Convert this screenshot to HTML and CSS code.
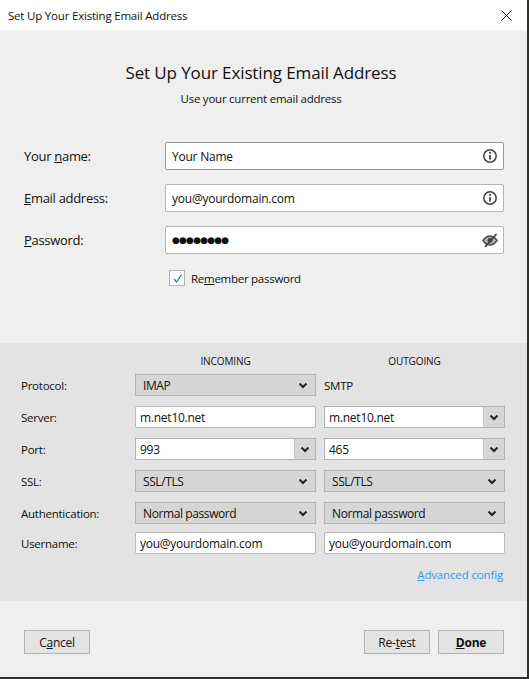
FILE: index.html
```html
<!DOCTYPE html>
<html lang="en">
<head>
<meta charset="utf-8">
<title>Set Up Your Existing Email Address</title>
<link rel="stylesheet" href="styles.css">
</head>
<body>
<div class="window">
  <header class="titlebar">
    <span class="titlebar-text">Set Up Your Existing Email Address</span>
    <svg class="close" width="11" height="11" viewBox="0 0 11 11"><path d="M.5.5l10 10M10.500.5l-10 10" stroke="#111" fill="none"/></svg>
  </header>
  <main class="content">
    <section class="intro">
      <h1 class="heading">Set Up Your Existing Email Address</h1>
      <p class="subheading">Use your current email address</p>
    </section>
    <section class="identity">
      <label class="id-label">Your <u>n</u>ame:</label>
      <div class="id-field id-field-active"><span>Your Name</span>
        <svg class="fi" width="16" height="16" viewBox="0 0 16 16"><circle cx="8" cy="8" r="6.200" fill="none" stroke="#444" stroke-width="1.500"/><path d="M8 7v4.500" stroke="#444" stroke-width="1.800"/><circle cx="8" cy="4.800" r="1.100" fill="#444"/></svg>
      </div>
      <label class="id-label"><u>E</u>mail address:</label>
      <div class="id-field"><span>you@yourdomain.com</span>
        <svg class="fi" width="16" height="16" viewBox="0 0 16 16"><circle cx="8" cy="8" r="6.200" fill="none" stroke="#444" stroke-width="1.500"/><path d="M8 7v4.500" stroke="#444" stroke-width="1.800"/><circle cx="8" cy="4.800" r="1.100" fill="#444"/></svg>
      </div>
      <label class="id-label"><u>P</u>assword:</label>
      <div class="id-field"><span class="dots">●●●●●●●●</span>
        <svg class="fi" width="16" height="16" viewBox="0 0 16 16"><path d="M1 8.500C3 5.500 5.300 4.200 8 4.200s5 1.300 7 4.300c-2 3-4.300 4.300-7 4.300s-5-1.300-7-4.300z" fill="#b5b5b5" stroke="#555" stroke-width="1.700"/><circle cx="8" cy="8.500" r="2.400" fill="#444"/><path d="M3 15L14.500 2" stroke="#444" stroke-width="1.800"/></svg>
      </div>
      <div class="remember">
        <span class="checkbox"><svg width="13" height="13" viewBox="0 0 13 13"><path d="M3 7l2.500 3L10.500 2.500" fill="none" stroke="#1c7fd6" stroke-width="1.300"/></svg></span>
        <span>Re<u>m</u>ember password</span>
      </div>
    </section>
    <section class="panel">
      <div class="config">
        <span class="col-head"></span><div class="col-head">INCOMING</div><div class="col-head">OUTGOING</div>
        <div class="cfg-label">Protocol:</div>
        <div class="select"><span>IMAP</span><svg class="chev" width="10" height="7" viewBox="0 0 10 7"><path d="M1.500 1.500L5 5l3.500-3.500" fill="none" stroke="#222" stroke-width="2"/></svg></div>
        <div class="plain">SMTP</div>
        <div class="cfg-label">Server:</div>
        <div class="text-input">m.net10.net</div>
        <div class="combo"><span class="combo-text">m.net10.net</span><span class="combo-btn"><svg class="chev" width="10" height="7" viewBox="0 0 10 7"><path d="M1.500 1.500L5 5l3.500-3.500" fill="none" stroke="#222" stroke-width="2"/></svg></span></div>
        <div class="cfg-label">Port:</div>
        <div class="combo"><span class="combo-text">993</span><span class="combo-btn"><svg class="chev" width="10" height="7" viewBox="0 0 10 7"><path d="M1.500 1.500L5 5l3.500-3.500" fill="none" stroke="#222" stroke-width="2"/></svg></span></div>
        <div class="combo"><span class="combo-text">465</span><span class="combo-btn"><svg class="chev" width="10" height="7" viewBox="0 0 10 7"><path d="M1.500 1.500L5 5l3.500-3.500" fill="none" stroke="#222" stroke-width="2"/></svg></span></div>
        <div class="cfg-label">SSL:</div>
        <div class="select"><span>SSL/TLS</span><svg class="chev" width="10" height="7" viewBox="0 0 10 7"><path d="M1.500 1.500L5 5l3.500-3.500" fill="none" stroke="#222" stroke-width="2"/></svg></div>
        <div class="select"><span>SSL/TLS</span><svg class="chev" width="10" height="7" viewBox="0 0 10 7"><path d="M1.500 1.500L5 5l3.500-3.500" fill="none" stroke="#222" stroke-width="2"/></svg></div>
        <div class="cfg-label row-auth">Authentication:</div>
        <div class="select row-auth"><span>Normal password</span><svg class="chev" width="10" height="7" viewBox="0 0 10 7"><path d="M1.500 1.500L5 5l3.500-3.500" fill="none" stroke="#222" stroke-width="2"/></svg></div>
        <div class="select row-auth"><span>Normal password</span><svg class="chev" width="10" height="7" viewBox="0 0 10 7"><path d="M1.500 1.500L5 5l3.500-3.500" fill="none" stroke="#222" stroke-width="2"/></svg></div>
        <div class="cfg-label last">Username:</div>
        <div class="text-input last">you@yourdomain.com</div>
        <div class="text-input last">you@yourdomain.com</div>
      </div>
      <div class="advanced"><a class="adv-link"><u>A</u>dvanced config</a></div>
    </section>
    <footer class="actions">
      <button class="btn"><span>C<u>a</u>ncel</span></button>
      <div class="actions-right">
        <button class="btn"><span>Re-<u>t</u>est</span></button>
        <button class="btn btn-primary"><span><u>D</u>one</span></button>
      </div>
    </footer>
  </main>
</div>
</body>
</html>
```
FILE: styles.css
```css
* { box-sizing: border-box; }
html, body { margin: 0; height: 100%; }
body {
  background: #2e2f26;
  overflow: hidden;
  font-family: "Open Sans", "Noto Sans", sans-serif;
  font-size: 12px;
  color: #111;
}
.window { width: 527px; height: 677px; display: flex; flex-direction: column; background: #efefef; }
.titlebar {
  height: 30px; background: #fff; display: flex; align-items: center; justify-content: space-between;
  padding: 0 15px 0 8px; flex: none;
}
.titlebar-text { font-size: 11.5px; letter-spacing: -0.2px; }
.content { flex: 1; display: flex; flex-direction: column; }
.intro { text-align: center; padding: 30px 5px 0 0; height: 112px; }
.heading { margin: 0; font-size: 17px; font-weight: 400; line-height: 26px; letter-spacing: -0.12px; }
.subheading { margin: 5px 0 0; font-size: 11.5px; line-height: 16px; letter-spacing: -0.24px; }
.identity {
  display: grid; grid-template-columns: 141px 339px; row-gap: 14px;
  padding-left: 24px; height: 201px; align-content: start; align-items: center;
}
.id-label { font-size: 13px; letter-spacing: -0.3px; }
.id-field {
  height: 28px; background: #fff; border: 1px solid #b4b4b4; border-radius: 2px;
  display: flex; align-items: center; justify-content: space-between; padding: 0 5px 0 6px;
  font-size: 12px; letter-spacing: -0.23px;
}
.id-field-active { border-color: #999; }
.dots { font-size: 9px; letter-spacing: -0.8px; font-family: "DejaVu Sans", sans-serif; }
.remember {
  grid-column: 2; display: flex; align-items: center; gap: 6px; padding-left: 4px; margin-top: 2px;
  font-size: 11.5px; letter-spacing: -0.27px;
}
.checkbox {
  width: 16px; height: 16px; background: #fff; border: 1px solid #b4b4b4; display: flex;
  align-items: center; justify-content: center;
}
.panel { background: #e3e3e3; height: 258px; padding: 10px 22px 0 21px; border-radius: 3px 0 0 3px; flex: none; }
.config { display: grid; grid-template-columns: 106px 181px 181px; column-gap: 8px; row-gap: 10px; align-items: center; }
.col-head { font-size: 10px; text-align: center; letter-spacing: -0.1px; height: 21px; line-height: 16px; margin-bottom: -10px; }
.cfg-label { font-size: 11.5px; letter-spacing: -0.25px; }
.row-auth { margin-bottom: -2px; }
.select {
  height: 22px; background: #d6d6d6; border: 1px solid #b3b3b3; display: flex; align-items: center;
  justify-content: space-between; padding: 0 7px; font-size: 12px; letter-spacing: -0.4px;
}
.plain { font-size: 11.5px; letter-spacing: -0.25px; }
.text-input {
  height: 22px; background: #fff; border: 1px solid #b9b9b9; border-radius: 2px; padding: 0 4px;
  line-height: 21px; font-size: 12px; letter-spacing: -0.25px; white-space: nowrap;
}
.combo { height: 22px; display: flex; background: #fff; border: 1px solid #b3b3b3; font-size: 12px; letter-spacing: -0.25px; }
.combo-text { flex: 1; padding-left: 4px; line-height: 21px; }
.combo-btn { width: 21px; background: #d6d6d6; border-left: 1px solid #c6c6c6; display: flex; align-items: center; justify-content: center; }
.advanced { text-align: right; padding-right: 2px; margin-top: 13px; font-size: 11.5px; letter-spacing: -0.15px; line-height: 16px; }
.adv-link { color: #3a95f0; }
.actions { flex: 1; display: flex; justify-content: space-between; align-items: flex-start; padding: 29px 23px 0 24px; }
.actions-right { display: flex; gap: 8px; }
.btn {
  width: 66px; height: 24px; background: #e3e3e3; border: 1px solid #b3b3b3; padding: 0;
  font: inherit; font-size: 12px; letter-spacing: -0.25px; color: #111;
}
.btn-primary { font-weight: 700; }
```
